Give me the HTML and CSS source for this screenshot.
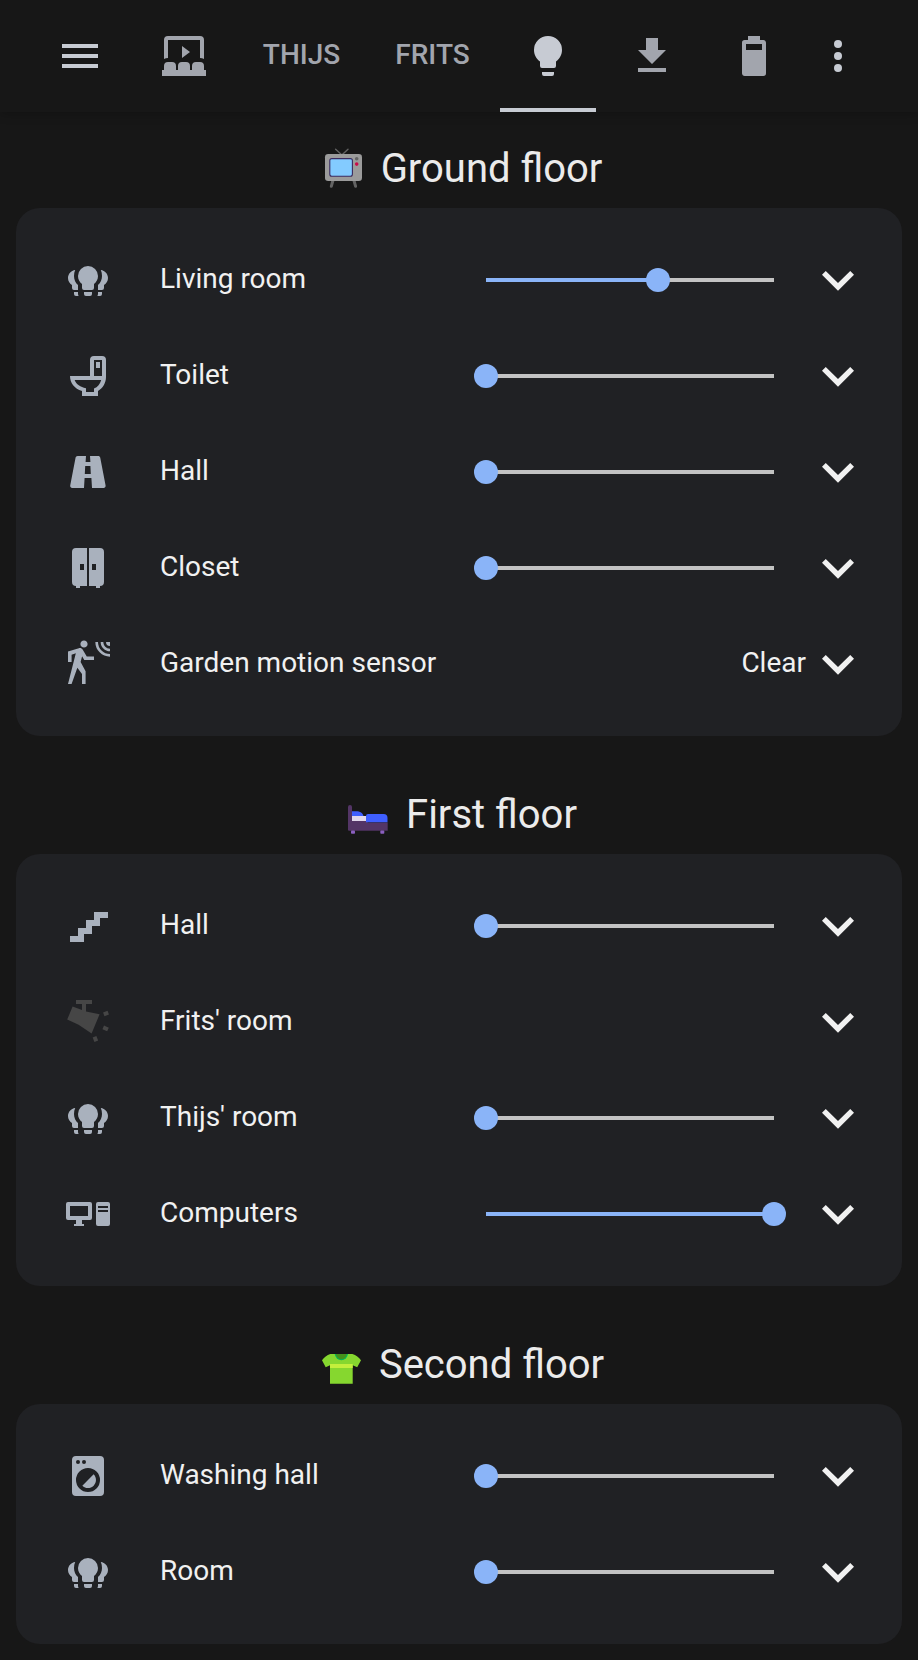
FILE: index.html
```html
<!DOCTYPE html>
<html lang="en">
<head>
<meta charset="utf-8">
<title>Lights</title>
<link rel="stylesheet" href="styles.css">
</head>
<body>
<svg class="defs" aria-hidden="true">
  <symbol id="bulbs" viewBox="0 0 24 24"><path d="M12,5A5,5 0 0,0 7,10C7,11.65 7.8,13.1 9,14V16A1,1 0 0,0 10,17H14A1,1 0 0,0 15,16V14C16.2,13.1 17,11.65 17,10A5,5 0 0,0 12,5M10,18V19A1,1 0 0,0 11,20H13A1,1 0 0,0 14,19V18H10M5.6,7C3.5,7.3 2,9 2,11C2,12.5 2.8,13.8 4,14.5V16A1,1 0 0,0 5,17H7V14.5C5.7,13.4 5,11.8 5,10C5,8.9 5.2,7.9 5.6,7M18.4,7C18.8,7.9 19,8.9 19,10C19,11.8 18.3,13.4 17,14.5V17H19A1,1 0 0,0 20,16V14.5C21.2,13.8 22,12.5 22,11C22,9 20.5,7.3 18.4,7M5,18V19A1,1 0 0,0 6,20H7.3A3,3 0 0,1 7,19V18H5M17,18V19A3,3 0 0,1 16.7,20H18A1,1 0 0,0 19,19V18H17Z"/></symbol>
  <symbol id="chevron" viewBox="0 0 24 24"><path d="M7.41,8.58L12,13.17L16.59,8.58L18,10L12,16L6,10L7.41,8.58Z"/></symbol>
</svg>

<header class="toolbar">
  <svg class="icon menu" viewBox="0 0 24 24"><path d="M3,6H21V8H3V6M3,11H21V13H3V11M3,16H21V18H3V16Z"/></svg>
  <nav class="tabs">
    <a class="tab"><svg class="icon" viewBox="0 0 24 24"><path d="M4,15H6A2,2 0 0,1 8,17V19H9V17A2,2 0 0,1 11,15H13A2,2 0 0,1 15,17V19H16V17A2,2 0 0,1 18,15H20A2,2 0 0,1 22,17V19H23V22H1V19H2V17A2,2 0 0,1 4,15M11,7L15,10L11,13V7M4,2H20A2,2 0 0,1 22,4V13.54C21.41,13.19 20.73,13 20,13V4H4V13C3.27,13 2.59,13.19 2,13.54V4A2,2 0 0,1 4,2Z"/></svg></a>
    <a class="tab tab-text">THIJS</a>
    <a class="tab tab-text tab-frits">FRITS</a>
    <a class="tab active"><svg class="icon" viewBox="0 0 24 24"><path d="M12,2A7,7 0 0,0 5,9C5,11.38 6.19,13.47 8,14.74V17A1,1 0 0,0 9,18H15A1,1 0 0,0 16,17V14.74C17.81,13.47 19,11.38 19,9A7,7 0 0,0 12,2M9,21A1,1 0 0,0 10,22H14A1,1 0 0,0 15,21V20H9V21Z"/></svg></a>
    <a class="tab"><svg class="icon" viewBox="0 0 24 24"><path d="M5,20H19V18H5M19,9H15V3H9V9H5L12,16L19,9Z"/></svg></a>
    <a class="tab"><svg class="icon" viewBox="0 0 24 24"><path d="M16,9H8V6H16M16.67,4H15V2H9V4H7.33A1.33,1.33 0 0,0 6,5.33V20.67C6,21.4 6.6,22 7.33,22H16.67A1.33,1.33 0 0,0 18,20.67V5.33C18,4.6 17.4,4 16.67,4Z"/></svg></a>
  </nav>
  <svg class="icon more" viewBox="0 0 24 24"><circle cx="12" cy="6" r="2"/><circle cx="12" cy="12" r="2"/><circle cx="12" cy="18" r="2"/></svg>
</header>

<main>
  <section class="floor">
    <h2 class="title">
      <svg class="emoji" viewBox="0 0 54 48"><path d="M25.4 10.6L19.6 5.2M26.4 10.6L32 5.2" stroke="#636363" stroke-width="1.4" stroke-linecap="round"/><path d="M17.2 35.5L15.3 42.3M37.7 35.5L39.6 42.3" stroke="#636363" stroke-width="3" stroke-linecap="round"/><rect x="9" y="10" width="37" height="27" rx="3.2" fill="#9b9b9b"/><rect x="13.8" y="14.6" width="22.6" height="17.6" rx="2" fill="#83cbff" stroke="#3b2a5e" stroke-width="1.1"/><circle cx="40.7" cy="14.7" r="1.8" fill="#636363"/><circle cx="40.7" cy="20.1" r="1.8" fill="#ca0b4a"/></svg>
      <span>Ground floor</span>
    </h2>
    <div class="card">
      <div class="row"><svg class="icon"><use href="#bulbs"/></svg><span class="name">Living room</span><div class="slider" style="--v:59.7%"><i class="thumb"></i></div><svg class="chev"><use href="#chevron"/></svg></div>
      <div class="row"><svg class="icon" viewBox="0 0 24 24"><path fill-rule="evenodd" d="M9,22H17V19.5C19.41,18.15 21,15.5 21,12.5V4A2,2 0 0,0 19,2H15A2,2 0 0,0 13,4V12H3C3,15.5 5.2,18.3 9,19.5V22M15,4H19V12H15V4M16,5V8H18V5H16M5.3,14H18.6C18.1,16 16.8,17.6 15,18.3V20H11V18.1C8.2,17.5 6.1,16.2 5.3,14Z"/></svg><span class="name">Toilet</span><div class="slider" style="--v:0%"><i class="thumb"></i></div><svg class="chev"><use href="#chevron"/></svg></div>
      <div class="row"><svg class="icon" viewBox="0 0 24 24"><path d="M18.1,4.8C18,4.3 17.6,4 17.1,4H13L13.2,7H10.8L11,4H6.8C6.3,4 5.9,4.4 5.8,4.8L3.1,18.8C3,19.4 3.5,20 4.1,20H10L10.3,15H13.7L14,20H19.8C20.4,20 20.9,19.4 20.8,18.8L18.1,4.8M10.4,13L10.6,9H13.2L13.4,13H10.4Z"/></svg><span class="name">Hall</span><div class="slider" style="--v:0%"><i class="thumb"></i></div><svg class="chev"><use href="#chevron"/></svg></div>
      <div class="row"><svg class="icon" viewBox="0 0 24 24"><path fill-rule="evenodd" d="M6,2H11.5V21H8V22H6V21A2,2 0 0,1 4,19V4A2,2 0 0,1 6,2M8,10V13H10V10H8M12.5,2H18A2,2 0 0,1 20,4V19A2,2 0 0,1 18,21V22H16V21H12.5V2M14,10V13H16V10H14Z"/></svg><span class="name">Closet</span><div class="slider" style="--v:0%"><i class="thumb"></i></div><svg class="chev"><use href="#chevron"/></svg></div>
      <div class="row"><svg class="icon" viewBox="0 0 24 24"><path d="M10,0.2C9,0.2 8.2,1 8.2,2C8.2,3 9,3.8 10,3.8C11,3.8 11.8,3 11.8,2C11.8,1 11,0.2 10,0.2M15.67,1A7.33,7.33 0 0,0 23,8.33V7A6,6 0 0,1 17,1H15.67M18.33,1C18.33,3.58 20.42,5.67 23,5.67V4.33C21.16,4.33 19.67,2.84 19.67,1H18.33M21,1A2,2 0 0,0 23,3V1H21M7.92,4.03C7.75,4.03 7.58,4.06 7.42,4.11L2,5.8V11H3.8V7.33L5.91,6.67L2,22H3.8L6.67,13.89L9,17V22H10.8V15.59L8.31,11.05L9.04,8.18L10.12,10H15V8.2H11.38L9.38,4.87C9.08,4.37 8.54,4.03 7.92,4.03Z"/></svg><span class="name">Garden motion sensor</span><span class="state">Clear</span><svg class="chev"><use href="#chevron"/></svg></div>
    </div>
  </section>

  <section class="floor">
    <h2 class="title">
      <svg class="emoji" viewBox="0 0 54 48"><path d="M11 21.2H15C19 21.2 22 23 22.6 26.5H11Z" fill="#3f5fff"/><path d="M11 26H25.5V31.5H11Z" fill="#e1d8ec"/><path d="M7 17A1.8 1.8 0 0 1 11 17V31H25L27 32.5H46.7V40.8H8A1 1 0 0 1 7 39.8Z" fill="#533566"/><path d="M25 26A2 2 0 0 1 27 24H42.5A4 4 0 0 1 46.5 28V32.3H25Z" fill="#3f5fff"/><rect x="10" y="40.6" width="4" height="3.2" rx=".8" fill="#8b5fbf"/><rect x="39.3" y="40.6" width="4" height="3.2" rx=".8" fill="#8b5fbf"/></svg>
      <span>First floor</span>
    </h2>
    <div class="card">
      <div class="row"><svg class="icon" viewBox="0 0 24 24"><path d="M15,5V9H11V13H7V17H3V20H10V16H14V12H18V8H22V5H15Z"/></svg><span class="name">Hall</span><div class="slider" style="--v:0%"><i class="thumb"></i></div><svg class="chev"><use href="#chevron"/></svg></div>
      <div class="row"><svg class="icon off" viewBox="0 0 24 24"><path d="M6,1H14V3H11V6.7L17.8,8.1L13.8,17.8L7.3,13.4L1.6,10.8L4.3,4.2L9,6V3H6Z"/><rect x="19.8" y="6.7" width="2.4" height="2" transform="rotate(-21 21 7.7)"/><rect x="19.5" y="14.2" width="2.6" height="2" transform="rotate(24 20.8 15.2)"/><rect x="14.5" y="19.5" width="2.4" height="2" transform="rotate(68 15.7 20.5)"/></svg><span class="name">Frits' room</span><svg class="chev"><use href="#chevron"/></svg></div>
      <div class="row"><svg class="icon"><use href="#bulbs"/></svg><span class="name">Thijs' room</span><div class="slider" style="--v:0%"><i class="thumb"></i></div><svg class="chev"><use href="#chevron"/></svg></div>
      <div class="row"><svg class="icon" viewBox="0 0 24 24"><path fill-rule="evenodd" d="M2,6H13A1,1 0 0,1 14,7V14A1,1 0 0,1 13,15H9V17H10V18H5V17H6V15H2A1,1 0 0,1 1,14V7A1,1 0 0,1 2,6M3,8V13H12V8H3M17,6H22A1,1 0 0,1 23,7V17A1,1 0 0,1 22,18H17A1,1 0 0,1 16,17V7A1,1 0 0,1 17,6M17,8V9H22V8H17M17,10V11H22V10H17Z"/></svg><span class="name">Computers</span><div class="slider" style="--v:100%"><i class="thumb"></i></div><svg class="chev"><use href="#chevron"/></svg></div>
    </div>
  </section>

  <section class="floor">
    <h2 class="title">
      <svg class="emoji" viewBox="0 0 54 48"><path d="M16.3 14H38.4C42 15 45 17.3 47 20.2L43.2 27.2L38.7 25.3V43.7H16V25.3L11.7 27.2L8 20.2C10 17.3 13 15 16.3 14Z" fill="#86d72f"/><path d="M16 24H38.7V28H16Z" fill="#c3ef3c"/><path d="M20.7 14H34A6.7 7 0 0 1 20.7 14Z" fill="#00b85c"/><path d="M22 14H32.7A5.3 5.3 0 0 1 22 14Z" fill="#44911b"/></svg>
      <span>Second floor</span>
    </h2>
    <div class="card">
      <div class="row"><svg class="icon" viewBox="0 0 24 24"><path d="M14.83,11.17C16.39,12.73 16.39,15.27 14.83,16.83C13.27,18.39 10.73,18.39 9.17,16.83L14.83,11.17M6,2H18A2,2 0 0,1 20,4V20A2,2 0 0,1 18,22H6A2,2 0 0,1 4,20V4A2,2 0 0,1 6,2M7,4A1,1 0 0,0 6,5A1,1 0 0,0 7,6A1,1 0 0,0 8,5A1,1 0 0,0 7,4M10,4A1,1 0 0,0 9,5A1,1 0 0,0 10,6A1,1 0 0,0 11,5A1,1 0 0,0 10,4M12,8A6,6 0 0,0 6,14A6,6 0 0,0 12,20A6,6 0 0,0 18,14A6,6 0 0,0 12,8Z"/></svg><span class="name">Washing hall</span><div class="slider" style="--v:0%"><i class="thumb"></i></div><svg class="chev"><use href="#chevron"/></svg></div>
      <div class="row"><svg class="icon"><use href="#bulbs"/></svg><span class="name">Room</span><div class="slider" style="--v:0%"><i class="thumb"></i></div><svg class="chev"><use href="#chevron"/></svg></div>
    </div>
  </section>
</main>
</body>
</html>
```
FILE: styles.css
```css
* {
  box-sizing: border-box;
}

body {
  margin: 0;
  min-height: 1660px;
  background: #171717;
  color: #f1f1f1;
  font-family: Roboto, "Noto Sans", sans-serif;
  font-size: 28px;
}

.defs {
  display: none;
}

.icon {
  display: block;
  flex: none;
  width: 48px;
  height: 48px;
  fill: currentColor;
}

.toolbar {
  display: flex;
  align-items: center;
  height: 112px;
  padding: 0 56px;
  background: #171717;
  color: #c7cbd3;
  box-shadow: 0 2px 10px rgba(0, 0, 0, 0.24);
}

.tabs {
  display: grid;
  grid-template-columns: 96px 139px 129px 96px 112px 92px;
  height: 112px;
  margin-left: 32px;
}

.tab {
  display: flex;
  align-items: center;
  justify-content: center;
  color: #a2a5ad;
  font-weight: 500;
  line-height: 32px;
  padding-top: 4px;
  border-bottom: 4px solid transparent;
}

.tab-text {
  padding-top: 2px;
}

.tab-frits {
  padding-right: 6px;
}

.tab.active {
  color: #c7cbd3;
  border-bottom-color: #c7cbd3;
}

.more {
  margin-left: 14px;
}

.floor {
  padding: 32px 16px 0;
}

.floor + .floor {
  padding-top: 54px;
}

.title {
  display: flex;
  justify-content: center;
  gap: 11px;
  height: 48px;
  margin: 0 0 16px;
  color: #ebebeb;
  font-size: 40px;
  font-weight: 400;
  line-height: 50px;
}

.emoji {
  width: 54px;
  height: 48px;
  fill: none;
}

.card {
  padding: 24px 32px 24px 48px;
  border-radius: 24px;
  background: #202124;
}

.row {
  display: flex;
  align-items: center;
  height: 96px;
}

.row .icon {
  color: #a9b1bd;
}

.row .icon.off {
  color: #464646;
}

.name {
  flex: 1;
  margin-left: 48px;
  line-height: 40px;
  margin-bottom: 2px;
}

.state {
  line-height: 40px;
  margin-bottom: 2px;
}

.slider {
  position: relative;
  width: 288px;
  height: 4px;
  margin-right: 32px;
  background: linear-gradient(to right, #8ab4f8 var(--v), #c3c3c3 var(--v));
}

.thumb {
  position: absolute;
  left: var(--v);
  top: 50%;
  width: 24px;
  height: 24px;
  border-radius: 50%;
  background: #8ab4f8;
  transform: translate(-50%, -50%);
}

.chev {
  width: 64px;
  height: 64px;
  fill: #f1f1f1;
}
```
